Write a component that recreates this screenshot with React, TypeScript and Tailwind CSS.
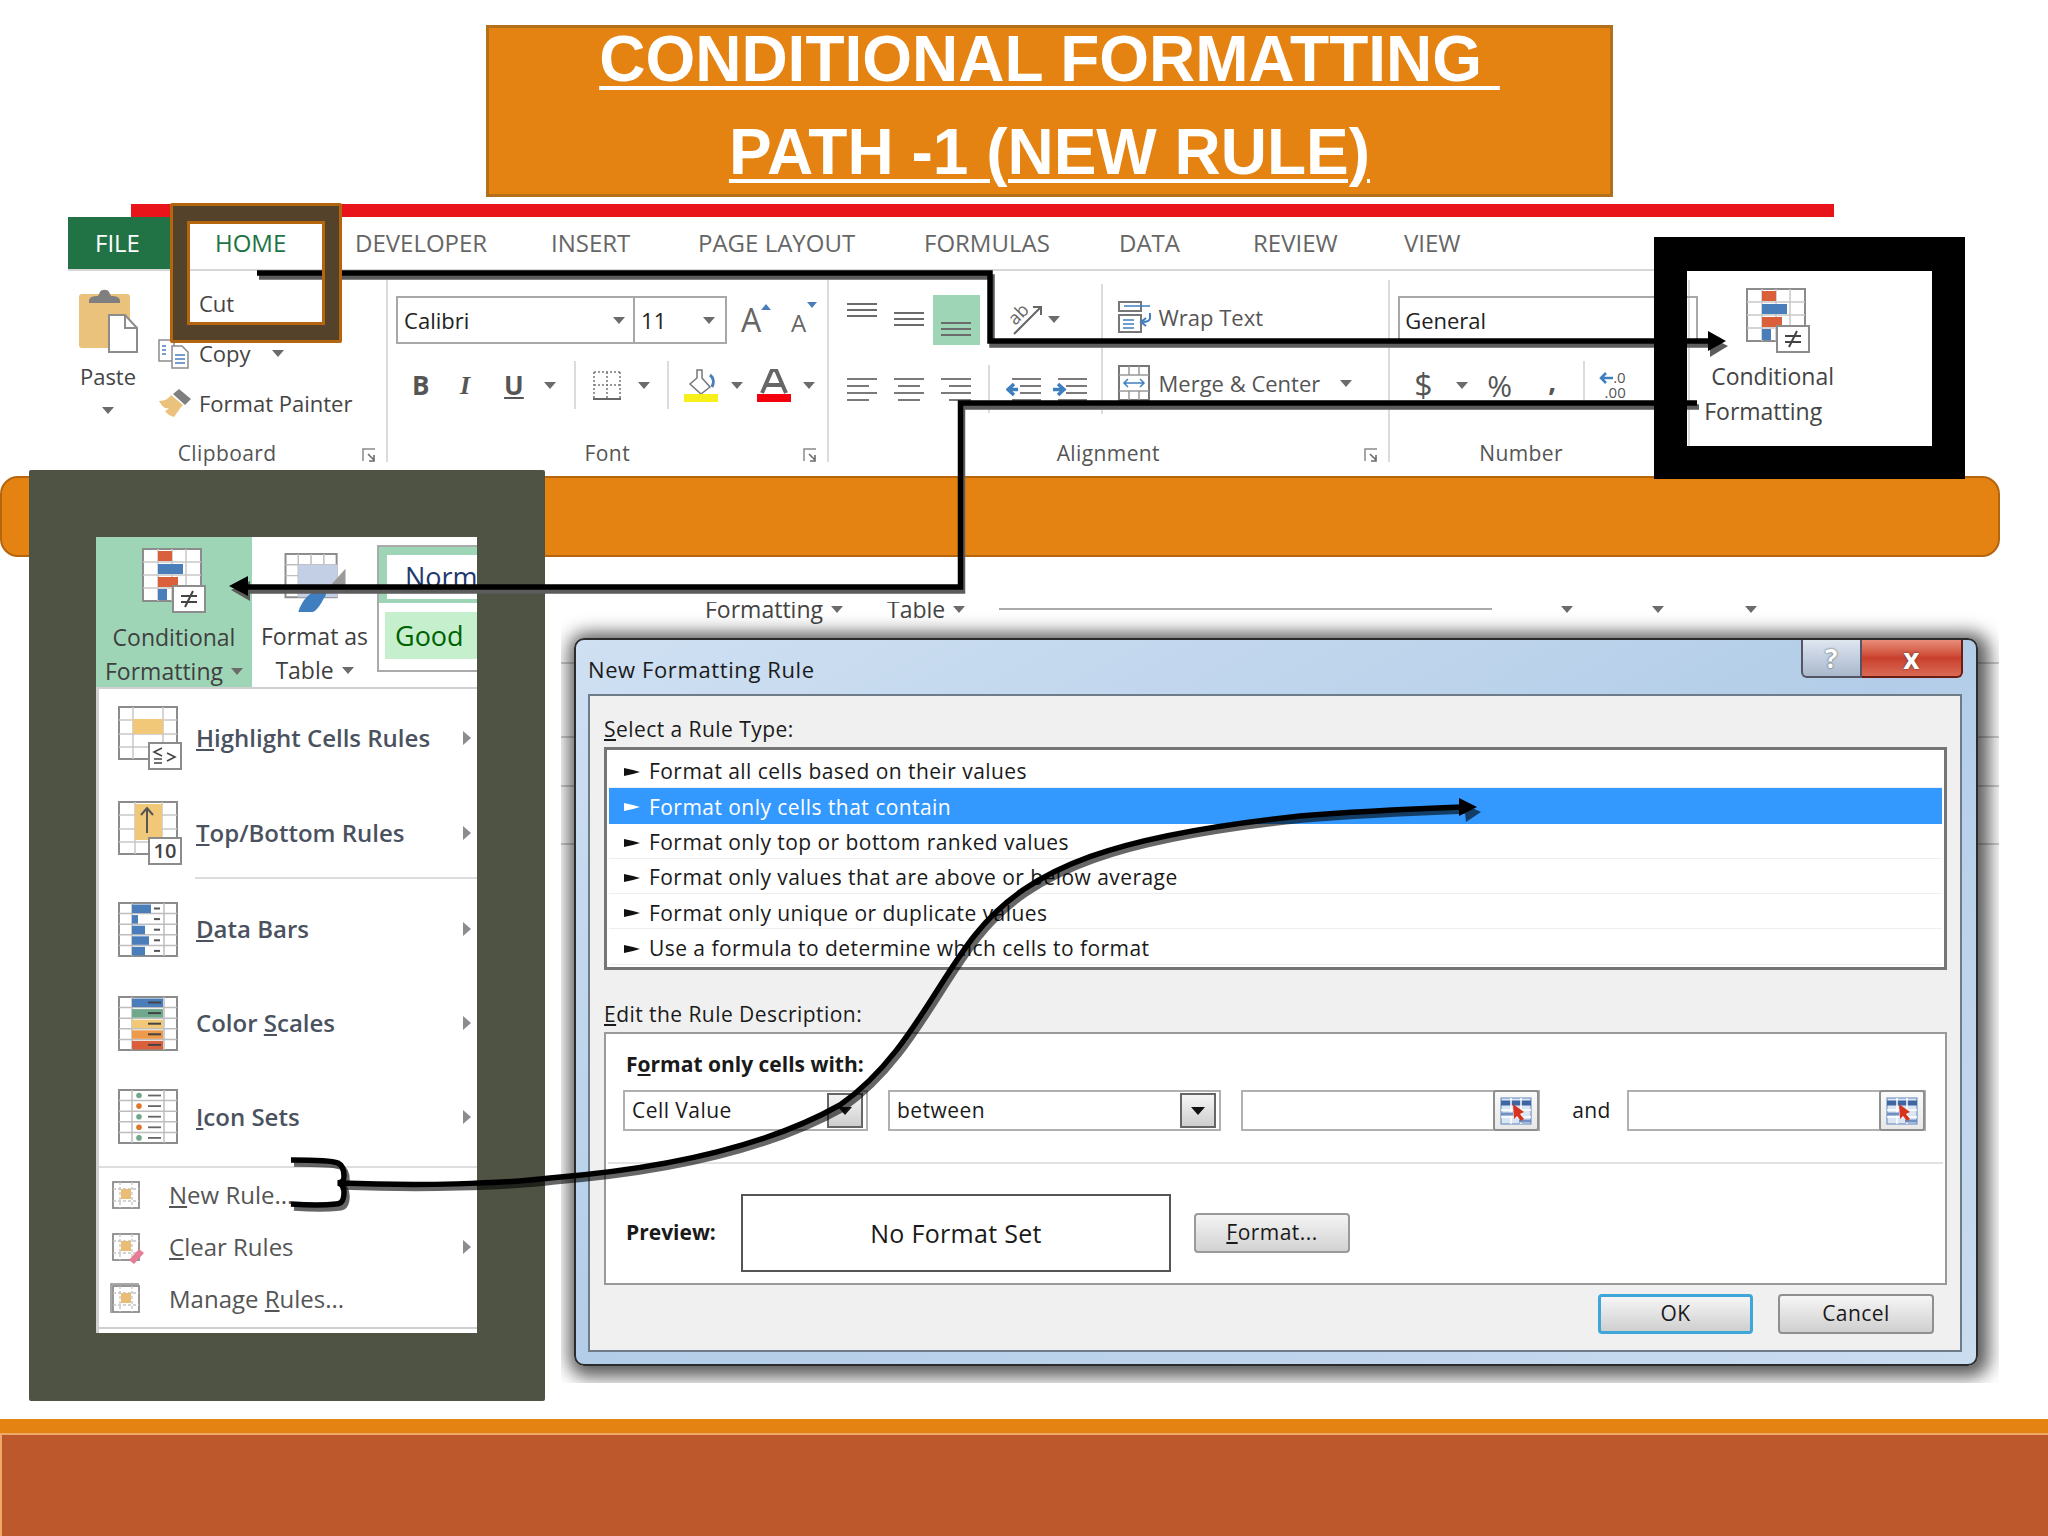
const ui = "font-['Open_Sans',sans-serif]";

function Caret({ className = "" }: { className?: string }) {
  return (
    <svg viewBox="0 0 12 7" className={`w-[12px] h-[7px] shrink-0 ${className}`}>
      <path d="M0 0h12L6 7z" fill="#6b6b6b" />
    </svg>
  );
}

function Launcher() {
  return (
    <svg viewBox="0 0 15 15" className="absolute right-[9px] top-[4px] w-[15px] h-[15px]">
      <path d="M1 13V1h12" fill="none" stroke="#8a8a8a" strokeWidth="1.5" />
      <path d="M6 6l6 6m0-5v6H7" fill="none" stroke="#6b6b6b" strokeWidth="1.6" />
    </svg>
  );
}

function GroupLabel({ text, launcher = true }: { text: string; launcher?: boolean }) {
  return (
    <div className="relative mt-auto h-[18px] flex items-center justify-center text-[#555] text-[21px] leading-[18px] tracking-[0.4px]">
      {text}
      {launcher && <Launcher />}
    </div>
  );
}

function CondIcon() {
  return (
    <svg viewBox="0 0 64 65" className="w-[64px] h-[65px] shrink-0">
      <rect x="1" y="1" width="58" height="52" fill="#fff" stroke="#8c8c8c" strokeWidth="2" />
      <path d="M16 1v52M30 1v52M44 1v52M1 14h58M1 27h58M1 40h58" stroke="#c8c8c8" strokeWidth="1.5" />
      <rect x="16" y="3" width="14" height="10" fill="#d9603b" />
      <rect x="16" y="16" width="25" height="10" fill="#4a7ebb" />
      <rect x="16" y="29" width="20" height="10" fill="#d9603b" />
      <rect x="16" y="41" width="9" height="11" fill="#4a7ebb" />
      <rect x="31" y="38" width="32" height="26" fill="#fff" stroke="#8c8c8c" strokeWidth="2" />
      <path d="M39 48h16M39 54h16M51 43l-8 16" stroke="#444" strokeWidth="2" />
    </svg>
  );
}

function TableBase({ children, w = 60, h = 55 }: { children: React.ReactNode; w?: number; h?: number }) {
  return (
    <svg viewBox={`0 0 ${w} ${h}`} className="shrink-0" width={w} height={h}>
      {children}
    </svg>
  );
}

function Grid5() {
  return (
    <>
      <rect x="1" y="1" width="58" height="53" fill="#fff" stroke="#8c8c8c" strokeWidth="2" />
      <path d="M14 1v53M46 1v53M1 11.6h58M1 22.2h58M1 32.8h58M1 43.4h58" stroke="#bdbdbd" strokeWidth="1.5" />
    </>
  );
}

function HighlightIcon() {
  return (
    <svg viewBox="0 0 64 64" width={64} height={64} className="shrink-0">
      <rect x="1" y="1" width="58" height="52" fill="#fff" stroke="#8c8c8c" strokeWidth="2" />
      <path d="M15 1v52M45 1v52M1 14h58M1 28h58M1 41h58" stroke="#c8c8c8" strokeWidth="1.5" />
      <rect x="15" y="13" width="30" height="15" fill="#f0c878" />
      <rect x="31" y="37" width="32" height="26" fill="#fff" stroke="#8c8c8c" strokeWidth="2" />
      <path d="M44 42l-8 4 8 4M36 53h8M36 57h8M49 47l8 4-8 4" fill="none" stroke="#444" strokeWidth="1.6" />
    </svg>
  );
}

function TopBottomIcon() {
  return (
    <svg viewBox="0 0 64 64" width={64} height={64} className="shrink-0">
      <rect x="1" y="1" width="58" height="52" fill="#fff" stroke="#8c8c8c" strokeWidth="2" />
      <path d="M17 1v52M44 1v52M1 14h58M1 28h58M1 41h58" stroke="#c8c8c8" strokeWidth="1.5" />
      <rect x="17" y="3" width="27" height="36" fill="#f0c878" />
      <path d="M29 32V7M23 14l6-7 6 7" fill="none" stroke="#555" strokeWidth="2" />
      <rect x="31" y="37" width="32" height="26" fill="#fff" stroke="#8c8c8c" strokeWidth="2" />
      <text x="47" y="57" textAnchor="middle" fontSize="20" fontFamily="Open Sans" fill="#444">10</text>
    </svg>
  );
}

function DataBarsIcon() {
  const bars = [19, 6, 13, 17, 13];
  return (
    <TableBase>
      <Grid5 />
      {bars.map((b, i) => (
        <g key={i}>
          <rect x="14" y={2.5 + i * 10.6} width={b} height="8.5" fill="#4a7ebb" />
          <path d={`M36 ${6.5 + i * 10.6}h6`} stroke="#555" strokeWidth="2" />
        </g>
      ))}
    </TableBase>
  );
}

function ColorScalesIcon() {
  const colors = ["#4a7ebb", "#6fa88a", "#f0c878", "#ed9a4a", "#d9603b"];
  return (
    <TableBase>
      <Grid5 />
      {colors.map((c, i) => (
        <g key={i}>
          <rect x="14" y={2.5 + i * 10.6} width="31" height="8.5" fill={c} />
          <path d={`M30 ${6.5 + i * 10.6}h13`} stroke="#444" strokeWidth="2" />
        </g>
      ))}
    </TableBase>
  );
}

function IconSetsIcon() {
  const dots = ["#6fa88a", "#e0762a", "#6fa88a", "#e0762a", "#6fa88a"];
  return (
    <TableBase>
      <Grid5 />
      {dots.map((c, i) => (
        <g key={i}>
          <circle cx="21" cy={6.5 + i * 10.6} r="2.8" fill={c} />
          <path d={`M30 ${6.5 + i * 10.6}h13`} stroke="#666" strokeWidth="1.8" />
        </g>
      ))}
    </TableBase>
  );
}

function SmallGrid({ extra }: { extra?: React.ReactNode }) {
  return (
    <svg viewBox="0 0 36 36" width={36} height={36} className="shrink-0">
      <rect x="4" y="5" width="26" height="26" fill="#fff" stroke="#8c8c8c" strokeWidth="1.8" />
      <path d="M11 5v26M23 5v26M4 12h26M4 24h26" stroke="#c4c4c4" strokeWidth="1.3" strokeDasharray="3 2" />
      <rect x="12" y="12" width="10" height="10" fill="#e9bd75" />
      {extra}
    </svg>
  );
}

function PickerBtn() {
  return (
    <div className="ml-auto -mr-[1px] w-[46px] h-[41px] shrink-0 border-2 border-[#8f8f8f] rounded-[3px] bg-gradient-to-b from-[#fafafa] to-[#e8e8e8] flex items-center justify-center">
      <svg viewBox="0 0 32 28" width={32} height={28}>
        <rect x="1" y="1" width="30" height="26" fill="#dbe6f4" stroke="#5f83b8" strokeWidth="1" />
        <path d="M1 6h30" stroke="#3f66a3" strokeWidth="5" />
        <path d="M1 13h30M1 20h30M11 1v26M21 1v26" stroke="#fff" strokeWidth="1.5" />
        <path d="M1 17h12M19 24h12" stroke="#6e90c4" strokeWidth="3" />
        <path d="M13 7l11 8-4 2 4 5-3 2-4-5-3 3z" fill="#d8331f" />
      </svg>
    </div>
  );
}

function ComboBtn() {
  return (
    <div className="ml-auto mr-[3px] w-[36px] h-[35px] shrink-0 border-2 border-[#666] bg-gradient-to-b from-[#f5f5f5] to-[#cfcfcf] flex items-center justify-center">
      <svg viewBox="0 0 14 8" className="w-[14px] h-[8px]">
        <path d="M0 0h14L7 8z" fill="#111" />
      </svg>
    </div>
  );
}

function Ribbon() {
  const tabs = [
    { label: "DEVELOPER", w: "w-[196px]" },
    { label: "INSERT", w: "w-[147px]" },
    { label: "PAGE LAYOUT", w: "w-[226px]" },
    { label: "FORMULAS", w: "w-[195px]" },
    { label: "DATA", w: "w-[134px]" },
    { label: "REVIEW", w: "w-[151px]" },
    { label: "VIEW", w: "w-[100px]" },
  ];
  return (
    <div className={`absolute left-[68px] top-[217px] w-[1766px] h-[255px] overflow-hidden bg-white ${ui}`}>
      {/* tabs */}
      <div className="flex h-[54px] items-center border-b-2 border-[#d6d6d6] text-[24px] whitespace-nowrap text-[#666]">
        <div className="w-[119px] h-full pl-[27px] flex items-center bg-[#217346] text-white">FILE</div>
        <div className="w-[168px] h-full pl-[28px] flex items-center text-[#217346] bg-white">HOME</div>
        {tabs.map((t) => (
          <div key={t.label} className={`${t.w} shrink-0`}>{t.label}</div>
        ))}
      </div>

      {/* groups */}
      <div className="flex pt-[9px] text-[22px] text-[#444]">
        {/* Clipboard */}
        <div className="w-[322px] h-[182px] border-r-2 border-[#dcdcdc] flex flex-col">
          <div className="flex">
            <div className="w-[80px] flex flex-col items-center pt-[9px]">
              <svg viewBox="0 0 60 64" width={60} height={64}>
                <rect x="1" y="5" width="51" height="54" rx="3" fill="#ebc27c" />
                <path d="M11 12c0-4 4-5 9-5l2-4c1-3 8-3 9 0l2 4c5 0 9 1 9 5v2H11z" fill="#7f7f7f" />
                <path d="M31 26h16l12 13v24H31z" fill="#fff" stroke="#8c8c8c" strokeWidth="2" />
                <path d="M47 26v13h12" fill="none" stroke="#8c8c8c" strokeWidth="2" />
              </svg>
              <div className="mt-[11px] leading-[24px]">Paste</div>
              <Caret className="mt-[19px]" />
            </div>
            <div className="relative pl-[10px] pt-[6px] flex flex-col gap-[16px]">
              <div className="flex items-center h-[34px] pl-[41px] text-[#444]">Cut</div>
              <div className="flex items-center h-[34px]">
                <svg viewBox="0 0 32 32" width={32} height={32} className="mr-[9px]">
                  <path d="M1 3h13l2 3v18H1z" fill="#fff" stroke="#8c8c8c" strokeWidth="1.5" />
                  <path d="M4 9h4M4 13h4M4 17h4" stroke="#4a7ebb" strokeWidth="1.5" />
                  <path d="M14 9h10l6 6v16H14z" fill="#fff" stroke="#8c8c8c" strokeWidth="1.5" />
                  <path d="M17 18h10M17 22h10M17 26h10" stroke="#4a7ebb" strokeWidth="1.5" />
                </svg>
                <span>Copy</span>
                <Caret className="ml-[21px]" />
              </div>
              <div className="flex items-center h-[34px]">
                <svg viewBox="0 0 34 30" width={34} height={30} className="mr-[7px]">
                  <path d="M1 13c6 0 10-3 12-6l12 10c-3 3-6 8-9 12-4-1-7-3-9-6 2-1 3-2 4-3-3 1-6 0-10-7z" fill="#ebc27c" />
                  <path d="M15 6l6-5 12 10-6 6z" fill="#7f7f7f" />
                </svg>
                <span>Format Painter</span>
              </div>
            </div>
          </div>
          <GroupLabel text="Clipboard" />
        </div>

        {/* Font */}
        <div className="w-[443px] h-[182px] border-r-2 border-[#dcdcdc] flex flex-col">
          <div className="mt-[16px] ml-[8px] flex items-center">
            <div className="w-[239px] h-[48px] border-2 border-[#a8a8a8] flex items-center pl-[6px] pr-[8px] text-[#222]">
              Calibri
              <Caret className="ml-auto" />
            </div>
            <div className="w-[92px] h-[48px] border-2 border-l-0 border-[#a8a8a8] flex items-center pl-[6px] pr-[10px] text-[#222]">
              11
              <Caret className="ml-auto" />
            </div>
            <div className="relative ml-[14px] w-[28px] text-[32px] leading-[32px] text-[#666]">
              A
              <svg viewBox="0 0 10 6" className="absolute -right-[2px] top-[0px] w-[10px] h-[6px]"><path d="M0 6h10L5 0z" fill="#4a7ebb" /></svg>
            </div>
            <div className="relative ml-[22px] w-[22px] mt-[6px] text-[24px] leading-[26px] text-[#666]">
              A
              <svg viewBox="0 0 10 6" className="absolute -right-[4px] -top-[8px] w-[10px] h-[6px]"><path d="M0 0h10L5 6z" fill="#4a7ebb" /></svg>
            </div>
          </div>
          <div className="mt-[17px] h-[48px] flex items-center text-[#555]">
            <div className="ml-[24px] font-bold w-[48px] text-[26px]">B</div>
            <div className="italic font-bold w-[44px] text-[26px] font-['Liberation_Serif',serif]">I</div>
            <div className="font-bold underline underline-offset-2 w-[25px] text-[26px]">U</div>
            <Caret className="ml-[15px]" />
            <div className="ml-[18px] w-[2px] h-[48px] bg-[#dcdcdc]" />
            <svg viewBox="0 0 28 29" width={28} height={29} className="ml-[17px]">
              <path d="M1 1h26M1 14h26M1 1v28M14 1v28M27 1v28" stroke="#777" strokeWidth="1.5" strokeDasharray="2 2" fill="none" />
              <path d="M0 28h28" stroke="#666" strokeWidth="2" />
            </svg>
            <Caret className="ml-[17px]" />
            <div className="ml-[17px] w-[2px] h-[48px] bg-[#dcdcdc]" />
            <svg viewBox="0 0 34 33" width={34} height={33} className="ml-[15px]">
              <path d="M13 1h5v8l8 9-9 7-11-10 7-6z" fill="#fff" stroke="#777" strokeWidth="1.5" />
              <path d="M26 6c4 3 4 8 2 12" fill="none" stroke="#4a7ebb" strokeWidth="3" />
              <rect x="0" y="25" width="34" height="8" fill="#f6ef1a" />
            </svg>
            <Caret className="ml-[13px]" />
            <svg viewBox="0 0 34 33" width={34} height={33} className="ml-[14px]">
              <path d="M5 24L15 1h4l10 23M9 16h16" fill="none" stroke="#666" strokeWidth="4" />
              <rect x="0" y="25" width="34" height="8" fill="#f4000d" />
            </svg>
            <Caret className="ml-[12px]" />
          </div>
          <GroupLabel text="Font" />
        </div>

        {/* Alignment */}
        <div className="w-[565px] h-[182px] border-r-2 border-[#dcdcdc] flex flex-col">
          <div className="flex">
            <div className="w-[274px] h-[130px] mt-[4px] border-r-2 border-[#dcdcdc]">
              <div className="flex items-start pl-[18px] pt-[11px] h-[61px]">
                <svg viewBox="0 0 30 16" width={30} height={16} className="mt-[7px]"><path d="M0 2h30M0 8h30M0 14h30" stroke="#6b6b6b" strokeWidth="2.2" /></svg>
                <svg viewBox="0 0 30 16" width={30} height={16} className="ml-[17px] mt-[16px]"><path d="M0 2h30M0 8h30M0 14h30" stroke="#6b6b6b" strokeWidth="2.2" /></svg>
                <div className="ml-[9px] w-[47px] h-[50px] bg-[#9fd5b7] flex items-end justify-center pb-[8px]">
                  <svg viewBox="0 0 30 16" width={30} height={16}><path d="M0 2h30M0 8h30M0 14h30" stroke="#6b6b6b" strokeWidth="2.2" /></svg>
                </div>
                <svg viewBox="0 0 36 36" width={36} height={36} className="ml-[26px] mt-[5px]">
                  <path d="M8 34L34 8M27 7h8v8" fill="none" stroke="#666" strokeWidth="2" />
                  <text x="3" y="21" fontSize="18" fontFamily="Open Sans" fill="#666" transform="rotate(-45 12 16)">ab</text>
                </svg>
                <Caret className="ml-[6px] mt-[21px]" />
              </div>
              <div className="flex items-center pl-[18px] mt-[20px]">
                {["M0 1h30M0 8h22M0 15h30M0 22h22", "M0 1h30M4 8h22M0 15h30M4 22h22", "M0 1h30M8 8h22M0 15h30M8 22h22"].map((d, i) => (
                  <svg key={i} viewBox="0 0 30 23" width={30} height={23} className={i ? "ml-[17px]" : ""}>
                    <path d={d} stroke="#7a7a7a" strokeWidth="2" />
                  </svg>
                ))}
                <div className="ml-[17px] w-[2px] h-[48px] bg-[#dcdcdc]" />
                <svg viewBox="0 0 35 23" width={35} height={23} className="ml-[16px]">
                  <path d="M6 1h29M14 8h21M14 15h21M6 22h29" stroke="#7a7a7a" strokeWidth="2" />
                  <path d="M12 11.5H4M8 6l-6 5.5L8 17" fill="none" stroke="#3f7fbf" strokeWidth="3.5" />
                </svg>
                <svg viewBox="0 0 35 23" width={35} height={23} className="ml-[11px]">
                  <path d="M6 1h29M14 8h21M14 15h21M6 22h29" stroke="#7a7a7a" strokeWidth="2" />
                  <path d="M1 11.5h9M6 6l6 5.5L6 17" fill="none" stroke="#3f7fbf" strokeWidth="3.5" />
                </svg>
              </div>
            </div>
            <div className="pl-[15px] pt-[20px] text-[#555]">
              <div className="flex items-center h-[34px]">
                <svg viewBox="0 0 34 32" width={34} height={32} className="mr-[7px]">
                  <rect x="1" y="1" width="22" height="9" fill="#fff" stroke="#777" strokeWidth="2" />
                  <path d="M6 5h26" stroke="#3f7fbf" strokeWidth="1.5" />
                  <rect x="1" y="14" width="22" height="17" fill="#fff" stroke="#777" strokeWidth="2" />
                  <path d="M5 19h11M5 23h11M5 27h11" stroke="#3f7fbf" strokeWidth="1.5" />
                  <path d="M32 12v5c0 3-3 4-8 4M28 17l-5 4 5 4" fill="none" stroke="#3f7fbf" strokeWidth="2" />
                </svg>
                Wrap Text
              </div>
              <div className="flex items-center h-[36px] mt-[31px]">
                <svg viewBox="0 0 32 36" width={32} height={36} className="mr-[9px]">
                  <rect x="1" y="1" width="30" height="34" fill="#fff" stroke="#777" strokeWidth="2" />
                  <path d="M1 10h30M1 26h30M11 1v9M21 1v9M11 26v9M21 26v9" stroke="#999" strokeWidth="1.5" />
                  <path d="M6 18h20M10 14l-4 4 4 4M22 14l4 4-4 4" fill="none" stroke="#3f7fbf" strokeWidth="1.5" />
                </svg>
                Merge &amp; Center
                <Caret className="ml-[20px]" />
              </div>
            </div>
          </div>
          <GroupLabel text="Alignment" />
        </div>

        {/* Number */}
        <div className="w-[300px] h-[182px] border-r-2 border-[#dcdcdc] flex flex-col">
          <div className="mt-[16px] ml-[8px] w-[300px] h-[48px] border-2 border-[#a8a8a8] flex items-center pl-[5px] text-[#222] shrink-0">General</div>
          <div className="mt-[17px] h-[48px] flex items-center text-[#555]">
            <div className="ml-[24px] text-[32px] w-[22px]">$</div>
            <Caret className="ml-[20px]" />
            <div className="ml-[19px] text-[30px] w-[34px]">%</div>
            <div className="ml-[27px] font-bold text-[28px] w-[8px] -mt-[10px]">,</div>
            <div className="ml-[27px] w-[2px] h-[48px] bg-[#dcdcdc]" />
            <div className="ml-[14px] flex flex-col text-[15px] leading-[15px] items-end">
              <div className="flex items-center">
                <svg viewBox="0 0 14 12" className="w-[14px] h-[12px]"><path d="M14 6H3M7 1L2 6l5 5" fill="none" stroke="#3f7fbf" strokeWidth="2.5" /></svg>
                .0
              </div>
              <div>.00</div>
            </div>
          </div>
          <div className="relative mt-auto h-[18px] flex items-center text-[#555] text-[21px] leading-[18px] tracking-[0.4px] pl-[89px]">Number</div>
        </div>

        {/* Conditional formatting, cut off by the black frame */}
        <div className="pl-[14px] text-[23px] text-[#444] leading-[35px] whitespace-nowrap">
          <div className="ml-[42px] mt-[8px]"><CondIcon /></div>
          <div className="ml-[7px] mt-[6px]">Conditional</div>
          <div>Formatting</div>
        </div>
      </div>
    </div>
  );
}

function MenuPanel() {
  const big = [
    { icon: <HighlightIcon />, label: <><u>H</u>ighlight Cells Rules</>, h: "h-[98px]", arrow: true },
    { icon: <TopBottomIcon />, label: <><u>T</u>op/Bottom Rules</>, h: "h-[92px]", arrow: true, line: true },
    { icon: <DataBarsIcon />, label: <><u>D</u>ata Bars</>, h: "h-[100px]", arrow: true },
    { icon: <ColorScalesIcon />, label: <>Color <u>S</u>cales</>, h: "h-[88px]", arrow: true },
    { icon: <IconSetsIcon />, label: <><u>I</u>con Sets</>, h: "h-[99px]", arrow: true },
  ];
  const small = [
    { label: <><u>N</u>ew Rule...</>, h: "h-[54px]", arrow: false, extra: null },
    {
      label: <><u>C</u>lear Rules</>,
      h: "h-[50px]",
      arrow: true,
      extra: <path d="M20 31l10-11 5 4-10 11z" fill="#e57d96" />,
    },
    {
      label: <>Manage <u>R</u>ules...</>,
      h: "h-[54px]",
      arrow: false,
      extra: <path d="M2 32V3h28" fill="none" stroke="#8c8c8c" strokeWidth="1.5" />,
    },
  ];
  return (
    <div className={`absolute left-[29px] top-[470px] w-[516px] h-[931px] bg-[#4f5344] rounded-[2px] pl-[67px] pt-[67px] ${ui}`}>
      <div className="w-[381px] h-[796px] bg-white overflow-hidden flex flex-col">
        <div className="flex h-[150px] shrink-0 text-[23px] text-[#3f3f3f] leading-[34px] whitespace-nowrap">
          <div className="w-[156px] bg-[#9fd5b7] flex flex-col items-center pt-[11px]">
            <CondIcon />
            <div className="mt-[7px]">Conditional</div>
            <div className="flex items-center">
              Formatting
              <Caret className="ml-[8px] w-[10px] h-[6px]" />
            </div>
          </div>
          <div className="w-[125px] flex flex-col items-center pt-[16px]">
            <svg viewBox="0 0 62 60" width={62} height={60}>
              <rect x="1" y="1" width="52" height="44" fill="#fff" stroke="#8c8c8c" strokeWidth="2" />
              <path d="M14 1v44M27 1v44M40 1v44M1 12h52M1 23h52M1 34h52" stroke="#bdbdbd" strokeWidth="1.5" />
              <rect x="14" y="12" width="40" height="33" fill="#c3cfe4" />
              <path d="M62 16v20H44z" fill="#9a9a9a" />
              <path d="M14 60c4-12 12-22 24-22 4 0 6 4 2 8-3 6-8 14-12 14z" fill="#3f7fbf" />
            </svg>
            <div className="mt-[7px]">Format as</div>
            <div className="flex items-center">
              Table
              <Caret className="ml-[8px] w-[10px] h-[6px]" />
            </div>
          </div>
          <div className="flex-1 mt-[8px] h-[127px] border-2 border-r-0 border-[#aaa] flex flex-col overflow-hidden">
            <div className="h-[56px] border-y-8 border-[#9fd5b7] border-b-4 pl-[18px] flex items-center text-[27px] text-[#1f3a6e] whitespace-nowrap border-l-8">Normal</div>
            <div className="ml-[6px] mt-[9px] h-[47px] bg-[#c6efce] pl-[10px] flex items-center text-[27px] text-[#006100]">Good</div>
          </div>
        </div>
        <div className="flex-1 border-l-[3px] border-t-2 border-[#d0d0d0] flex flex-col text-[24px] font-semibold text-[#4a5260] whitespace-nowrap">
          {big.map((it, i) => (
            <div key={i} className={it.h}>
              <div className="h-full flex items-center pl-[19px] relative">
                <div className="w-[78px] shrink-0">{it.icon}</div>
                <div>{it.label}</div>
                <svg viewBox="0 0 8 14" className="absolute right-[6px] w-[8px] h-[14px]"><path d="M0 0l8 7-8 7z" fill="#8c8c8c" /></svg>
                {it.line && <div className="absolute left-[96px] right-0 bottom-0 h-[2px] bg-[#dcdcdc]" />}
              </div>
            </div>
          ))}
          <div className="h-[2px] bg-[#dedede] shrink-0" />
          <div className="font-normal text-[#555]">
            {small.map((it, i) => (
              <div key={i} className={`${it.h} flex items-center pl-[10px] relative`}>
                <div className="w-[60px] shrink-0"><SmallGrid extra={it.extra} /></div>
                <div>{it.label}</div>
                {it.arrow && <svg viewBox="0 0 8 14" className="absolute right-[6px] w-[8px] h-[14px]"><path d="M0 0l8 7-8 7z" fill="#8c8c8c" /></svg>}
              </div>
            ))}
          </div>
          <div className="mt-auto h-[6px] border-b-0 border-t-2 border-[#cfcfcf] bg-white" />
        </div>
      </div>
    </div>
  );
}

function Dialog() {
  const rules = [
    "Format all cells based on their values",
    "Format only cells that contain",
    "Format only top or bottom ranked values",
    "Format only values that are above or below average",
    "Format only unique or duplicate values",
    "Use a formula to determine which cells to format",
  ];
  return (
    <div className={`absolute left-[561px] top-[602px] w-[1438px] h-[781px] overflow-hidden bg-white ${ui}`}>
      {/* bits of the sheet behind the dialog */}
      <div className="flex items-center h-[14px] overflow-visible text-[23px] text-[#444] whitespace-nowrap">
        <span className="ml-[144px]">Formatting</span>
        <Caret className="ml-[8px] w-[10px] h-[6px]" />
        <span className="ml-[44px]">Table</span>
        <Caret className="ml-[8px] w-[10px] h-[6px]" />
        <div className="ml-[34px] w-[493px] h-[2px] bg-[#aaa]" />
        <Caret className="ml-[69px]" />
        <Caret className="ml-[79px]" />
        <Caret className="ml-[81px]" />
      </div>
      <div className="absolute inset-x-0 top-[60px] h-[2px] bg-[#cfcfcf]" />
      <div className="absolute inset-x-0 top-[134px] h-[2px] bg-[#cfcfcf]" />
      <div className="absolute inset-x-0 top-[183px] h-[2px] bg-[#cfcfcf]" />
      <div className="absolute inset-x-0 top-[241px] h-[2px] bg-[#cfcfcf]" />

      {/* window */}
      <div className="absolute left-[13px] top-[36px] w-[1404px] h-[728px] rounded-[10px] border-2 border-[#2c2c2c] bg-gradient-to-br from-[#cfe0f2] via-[#b3cde8] to-[#cadcf0] shadow-[3px_3px_18px_8px_rgba(0,0,0,0.65)] flex flex-col px-[12px] text-[#1a1a1a] text-[21px] tracking-[0.45px]">
        <div className="h-[54px] shrink-0 flex items-start justify-between">
          <div className="mt-[16px] leading-[26px] text-[22px] tracking-[0.6px]">New Formatting Rule</div>
          <div className="flex -mr-[-1px] h-[38px]">
            <div className="w-[61px] border-x-2 border-b-2 border-[#556] rounded-bl-[6px] bg-gradient-to-b from-[#dfe6ef] via-[#c3cfdf] to-[#a9b8cc] flex items-center justify-center text-white font-bold text-[26px] [text-shadow:0_0_2px_#333]">?</div>
            <div className="w-[101px] border-r-2 border-b-2 border-[#6b1d12] rounded-br-[6px] bg-gradient-to-b from-[#e88e7a] via-[#c9402c] to-[#d96a55] flex items-center justify-center text-white font-bold text-[28px] [text-shadow:0_0_2px_#333]">x</div>
          </div>
        </div>
        <div className="flex-1 mb-[12px] mr-[2px] border-2 border-[#6e7b88] bg-[#f0f0f0] pl-[14px] pr-[13px] flex flex-col">
          <div className="mt-[22px] h-[22px] leading-[22px]"><u>S</u>elect a Rule Type:</div>
          <div className="mt-[7px] h-[223px] border-[3px] border-[#757575] bg-white px-[2px] pt-[3px]">
            {rules.map((r, i) => (
              <div
                key={r}
                className={`h-[35.3px] flex items-center gap-[9px] pl-[15px] pt-[4px] border-b ${
                  i === 1 ? "bg-[#3399ff] text-white border-[#3399ff]" : "border-[#efefef]"
                }`}
              >
                <svg viewBox="0 0 16 8" className="w-[16px] h-[8px] shrink-0">
                  <path d="M0 0l9 2 7 2-7 2-9 2z" fill={i === 1 ? "#fff" : "#111"} />
                </svg>
                {r}
              </div>
            ))}
          </div>
          <div className="mt-[33px] h-[22px] leading-[22px]"><u>E</u>dit the Rule Description:</div>
          <div className="mt-[7px] h-[253px] border-2 border-[#999] bg-white flex flex-col">
            <div className="mt-[18px] ml-[20px] h-[24px] leading-[24px] font-bold tracking-normal">F<u>o</u>rmat only cells with:</div>
            <div className="mt-[14px] flex items-center h-[41px] ml-[17px] gap-[20px]">
              <div className="w-[245px] h-[41px] border-2 border-[#b0b0b0] flex items-center pl-[7px]">Cell Value<ComboBtn /></div>
              <div className="w-[333px] h-[41px] border-2 border-[#b0b0b0] flex items-center pl-[7px]">between<ComboBtn /></div>
              <div className="w-[299px] h-[41px] border-2 border-[#b0b0b0] flex items-center"><PickerBtn /></div>
              <div className="w-[67px] -mx-[0px] text-center -ml-[2px]">and</div>
              <div className="w-[299px] h-[41px] -ml-[18px] border-2 border-[#b0b0b0] flex items-center"><PickerBtn /></div>
            </div>
            <div className="mt-[31px] mx-[2px] h-[2px] bg-[#e2e2e2]" />
            <div className="mt-[30px] flex items-center ml-[20px]">
              <div className="w-[115px] font-bold tracking-normal">Preview:</div>
              <div className="w-[430px] h-[78px] border-2 border-[#555] flex items-center justify-center text-[25px] tracking-[0.3px] pt-[2px]">No Format Set</div>
              <button className="ml-[23px] mb-[0px] w-[156px] h-[40px] border-2 border-[#9a9a9a] rounded-[4px] bg-gradient-to-b from-[#f4f4f4] to-[#d2d2d2] text-center"><u>F</u>ormat...</button>
            </div>
          </div>
          <div className="mt-[9px] flex justify-end gap-[25px] pr-[13px] mr-0">
            <button className="w-[155px] h-[40px] border-[3px] border-[#3fa6da] rounded-[4px] bg-gradient-to-b from-[#f6f6f6] to-[#cfcfcf]">OK</button>
            <button className="w-[156px] h-[40px] border-2 border-[#8f8f8f] rounded-[4px] bg-gradient-to-b from-[#f6f6f6] to-[#cfcfcf]">Cancel</button>
          </div>
        </div>
      </div>
    </div>
  );
}

function Arrows() {
  const arrow1 = "M257 273H990V341H1712";
  const arrow2 = "M1697 403H960.5V587H240";
  const brace = "M291 1160C310 1160 330 1160 338 1163C344 1166 344 1172 344 1176C344 1180 343 1182 338 1183C343 1184 344 1188 344 1192C344 1200 342 1204 336 1204C320 1206 305 1205 291 1204";
  const curve = "M340 1183C420 1186 500 1184 550 1178C650 1170 760 1150 840 1105C905 1060 935 985 975 935C1030 865 1120 835 1300 816C1360 811 1410 809 1462 807";
  return (
    <>
      <svg className="absolute left-0 top-0 z-20 pointer-events-none" width={2048} height={1536} fill="none">
        <g transform="translate(2 4)" stroke="#5c5c5c" strokeWidth="5.5">
          <path d={arrow1} />
          <path d={arrow2} />
          <path d="M1708 333l18 9-18 11z" fill="#5c5c5c" stroke="none" />
          <path d="M229 586l19-9v20z" fill="#5c5c5c" stroke="none" />
        </g>
        <g stroke="#000" strokeWidth="5.5">
          <path d={arrow1} />
          <path d={arrow2} />
          <path d="M1708 331l18 10-18 10z" fill="#000" stroke="none" />
          <path d="M229 586l19-10v20z" fill="#000" stroke="none" />
        </g>
      </svg>
      <svg className="absolute left-0 top-0 z-40 pointer-events-none" width={2048} height={1536} fill="none">
        <g transform="translate(3 4)" stroke="#000" strokeOpacity="0.6" strokeWidth="5.5">
          <path d={brace} />
          <path d={curve} />
          <path d="M1461 800l17 8-15 10z" fill="#000" fillOpacity="0.6" stroke="none" />
        </g>
        <g stroke="#000" strokeWidth="5.5">
          <path d={brace} />
          <path d={curve} />
          <path d="M1459 798l18 9-18 9z" fill="#000" stroke="none" />
        </g>
      </svg>
    </>
  );
}

export default function App() {
  return (
    <div className="relative w-[2048px] h-[1536px] overflow-hidden bg-white">
      {/* title */}
      <div className="absolute left-[486px] top-[25px] w-[1127px] h-[172px] bg-[#e48312] border-[3px] border-[#b2701b] font-['Liberation_Sans',sans-serif] font-bold text-white text-[64px] leading-[93px] text-center underline underline-offset-[5px] decoration-[4px]">
        <div className="-mt-[15px] whitespace-pre">CONDITIONAL FORMATTING </div>
        <div>PATH -1 (NEW RULE)</div>
      </div>

      <div className="absolute left-[131px] top-[204px] w-[1703px] h-[13px] bg-[#e8141a]" />

      <Ribbon />

      <div className="absolute left-0 top-[476px] w-[2000px] h-[81px] rounded-[18px] bg-[#e48312] border-2 border-[#b5650e]" />

      <Dialog />
      <MenuPanel />
      <Arrows />

      {/* frames drawn over the ribbon */}
      <div className="absolute z-30 left-[170px] top-[203px] w-[172px] h-[140px] border-[3px] border-[#b5650e] rounded-[2px]">
        <div className="h-full border-x-[14px] border-t-[15px] border-b-[15px] border-[#55422a]">
          <div className="h-full border-[3px] border-[#b5650e]" />
        </div>
      </div>
      <div className="absolute z-30 left-[1654px] top-[237px] w-[311px] h-[242px] border-x-[33px] border-t-[34px] border-b-[33px] border-black" />

      {/* footer */}
      <div className="absolute left-0 right-0 bottom-0 h-[117px] flex flex-col">
        <div className="h-[14px] bg-[#e48312]" />
        <div className="flex-1 bg-[#bd582c] border-t-2 border-l-2 border-[#f0a868]" />
      </div>
    </div>
  );
}
